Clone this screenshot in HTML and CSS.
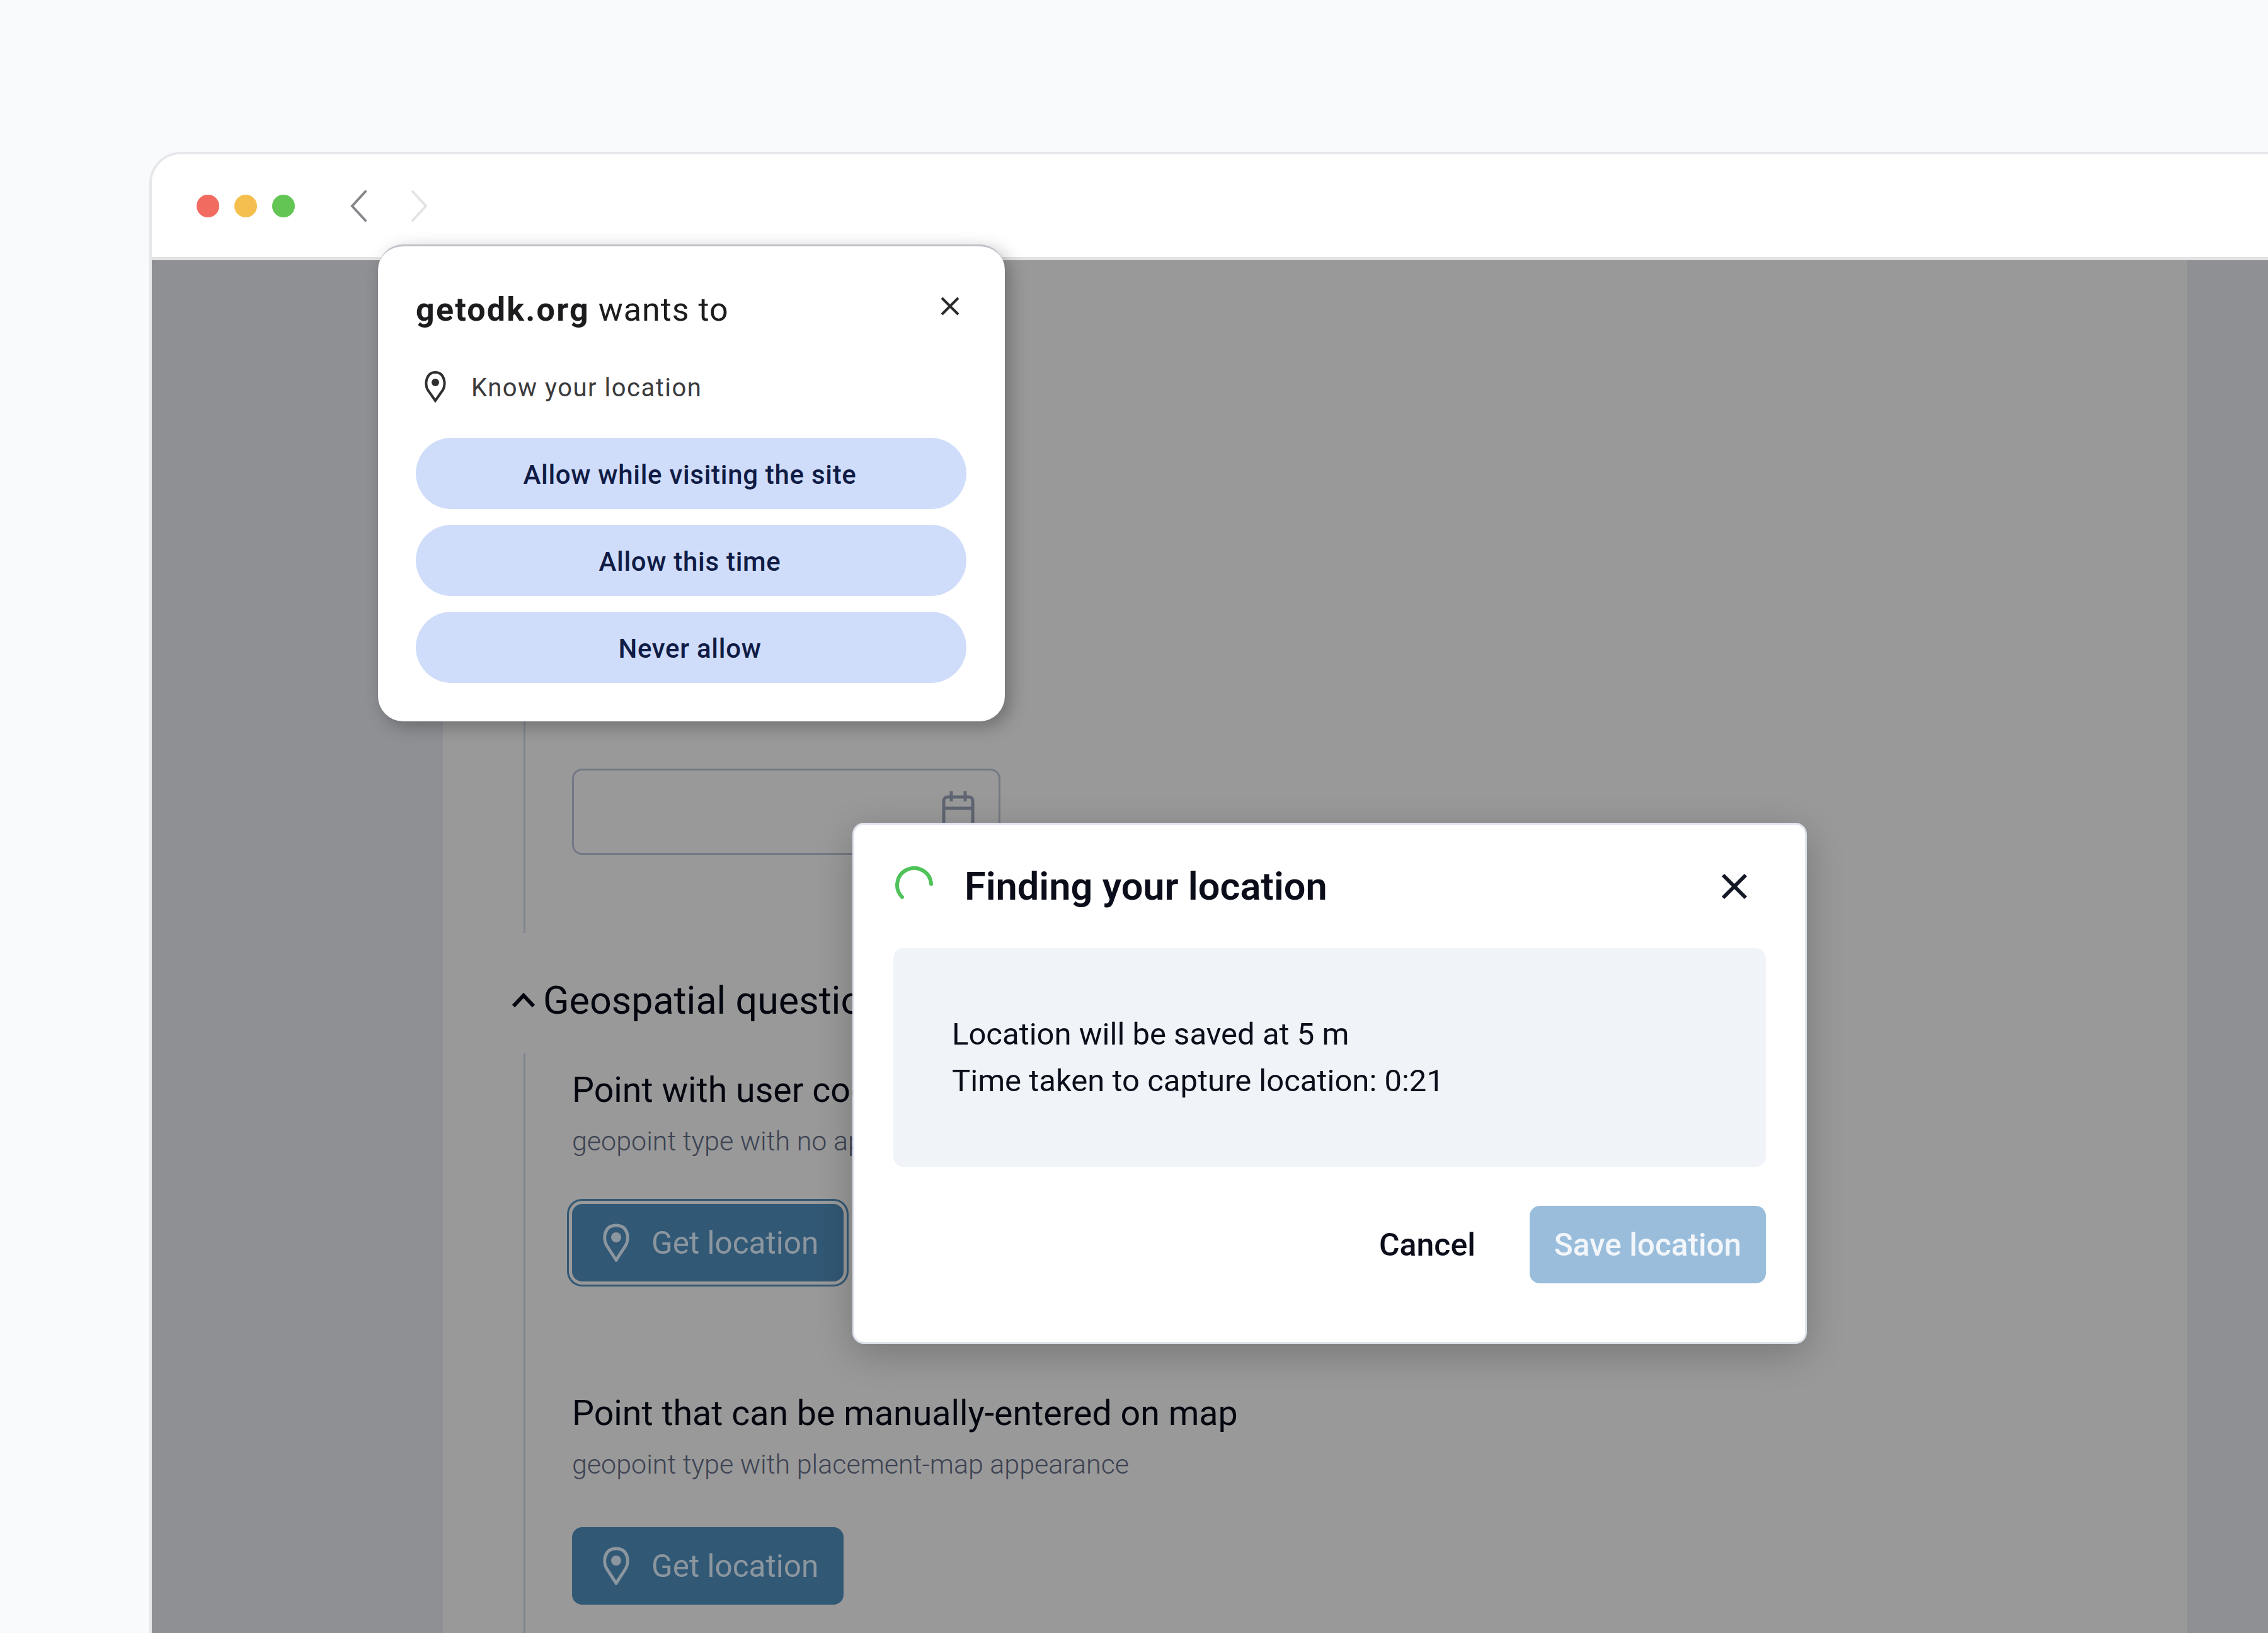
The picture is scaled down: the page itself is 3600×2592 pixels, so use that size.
FILE: index.html
```html
<!DOCTYPE html>
<html lang="en">
<head>
<meta charset="utf-8">
<title>Finding your location</title>
<link rel="stylesheet" href="styles.css">
</head>
<body>
<div class="stage">
  <div class="window">
    <header class="toolbar">
      <span class="dot dot-red"></span>
      <span class="dot dot-yellow"></span>
      <span class="dot dot-green"></span>
      <svg class="nav nav-back" viewBox="0 0 26 50"><path d="M24 2 3 25l21 23"/></svg>
      <svg class="nav nav-forward" viewBox="0 0 26 50"><path d="M2 2l21 23L2 48"/></svg>
    </header>
    <div class="content">
      <div class="gutter"></div>
      <main class="form">
        <section class="group group-first">
          <div class="date-input">
            <svg class="calendar" viewBox="0 0 52 60"><path d="M3 60V17a6 6 0 0 1 6-6h34a6 6 0 0 1 6 6v43M3 29h46M15 2v16M37 2v16"/></svg>
          </div>
        </section>
        <h2 class="section-head">
          <svg class="chevron" viewBox="0 0 36 24"><path d="M2 21 18 4l16 17"/></svg>
          Geospatial questions
        </h2>
        <section class="group">
          <div class="question">
            <h3 class="q-title">Point with user coordinates</h3>
            <p class="q-hint">geopoint type with no appearance</p>
            <button class="get-btn get-btn-focus">
              <svg class="pin-btn" viewBox="0 0 44 61"><path d="M22 58 7 35C1 25 2 3 22 3s21 22 15 32Z"/><circle cx="22" cy="22" r="8"/></svg>
              Get location
            </button>
          </div>
          <div class="question">
            <h3 class="q-title">Point that can be manually-entered on map</h3>
            <p class="q-hint">geopoint type with placement-map appearance</p>
            <button class="get-btn">
              <svg class="pin-btn" viewBox="0 0 44 61"><path d="M22 58 7 35C1 25 2 3 22 3s21 22 15 32Z"/><circle cx="22" cy="22" r="8"/></svg>
              Get location
            </button>
          </div>
        </section>
      </main>
      <div class="gutter gutter-right"></div>
    </div>
  </div>

  <aside class="prompt">
    <div class="prompt-head">
      <p class="prompt-title"><b>getodk.org</b> wants to</p>
      <svg class="prompt-close" viewBox="0 0 32 32"><path d="M3 3l26 26M29 3 3 29"/></svg>
    </div>
    <div class="prompt-row">
      <svg class="pin-small" viewBox="0 0 36 50"><path d="M18 47 6 30C1 21 3 2 18 2s17 19 12 28Z"/><circle cx="18" cy="18" r="6"/></svg>
      <span>Know your location</span>
    </div>
    <div class="prompt-actions">
      <button class="pill">Allow while visiting the site</button>
      <button class="pill">Allow this time</button>
      <button class="pill">Never allow</button>
    </div>
  </aside>

  <aside class="modal">
    <div class="modal-head">
      <svg class="spinner" viewBox="0 0 64 56"><path d="M59 30A27 27 0 1 0 13 51"/></svg>
      <h1 class="modal-title">Finding your location</h1>
      <svg class="modal-close" viewBox="0 0 44 44"><path d="M4 4l36 36M40 4 4 40"/></svg>
    </div>
    <div class="modal-panel">
      <p>Location will be saved at 5 m</p>
      <p>Time taken to capture location: 0:21</p>
    </div>
    <div class="modal-actions">
      <button class="btn-cancel">Cancel</button>
      <button class="btn-save">Save location</button>
    </div>
  </aside>
</div>
</body>
</html>
```

FILE: styles.css
```css
* { box-sizing: border-box; }
html, body { margin: 0; padding: 0; width: 3600px; height: 2592px; overflow: hidden; }
body { background: #f9fafc; font-family: Roboto, "Liberation Sans", sans-serif; }
button { font: inherit; border: 0; padding: 0; cursor: pointer; }
h1, h2, h3, p { margin: 0; font-weight: 400; }

.stage { position: relative; width: 3600px; height: 2592px; padding: 241px 0 0 237px; overflow: hidden; }

.window { height: 2351px; display: flex; flex-direction: column; background: #fff;
  border: 4px solid #e6e7ea; border-right: 0; border-bottom: 0; border-top-left-radius: 50px; overflow: hidden; }

.toolbar { flex: 0 0 168px; display: flex; align-items: center; padding-left: 71px; background: #fff; border-bottom: 5px solid #e3e3e3; }
.dot { width: 36px; height: 36px; border-radius: 50%; margin-right: 24px; }
.dot-red { background: #f16b60; }
.dot-yellow { background: #f5bf4f; }
.dot-green { background: #62c554; }
.nav { width: 26px; height: 50px; fill: none; stroke-width: 4px; stroke-linecap: round; }
.nav-back { stroke: #85868a; margin-left: 64px; }
.nav-forward { stroke: #e3e3e5; margin-left: 71px; }

.content { flex: 1; display: flex; background: #999; min-height: 0; }
.gutter { flex: 0 0 462px; background: #8f9094; }
.gutter-right { flex: 0 0 128px; }
.form { flex: 1; padding-left: 128px; color: #04060f; }

.group { border-left: 3px solid #7e8490; padding-left: 74px; }
.group-first { height: 1068px; padding-top: 807px; }
.date-input { width: 680px; height: 137px; border: 3px solid #737884; border-radius: 16px; display: flex; justify-content: flex-end; padding: 31px 38px 0 0; overflow: hidden; }
.calendar { width: 52px; height: 60px; fill: none; stroke: #5f6572; stroke-width: 5px; }

.section-head { height: 190px; display: flex; align-items: center; gap: 13px; margin-left: -18px; font-size: 61px; padding-top: 24px; }
.chevron { width: 36px; height: 24px; fill: none; stroke: #04060f; stroke-width: 6px; }

.question { padding-bottom: 150px; }
.q-title { font-size: 55.500px; line-height: 66px; padding-top: 27px; }
.q-hint { font-size: 43px; line-height: 52px; font-weight: 300; color: #3c4252; margin-top: 21px; }
.get-btn { margin-top: 74px; width: 431px; height: 123px; border-radius: 16px; background: #315875; color: #8c969f; font-size: 49.500px; font-weight: 400; display: flex; align-items: center; padding-left: 48px; gap: 34px; }
.get-btn-focus { box-shadow: 0 0 0 5px #999, 0 0 0 8px #315875; }
.pin-btn { width: 44px; height: 61px; fill: none; stroke: #8c969f; stroke-width: 5px; }
.pin-btn circle { fill: #8c969f; stroke: none; }

.prompt { position: absolute; left: 600px; top: 388px; width: 995px; height: 757px; padding: 0 61px 0 60px; background: #fff; border-radius: 40px; border-top: 3px solid #bfc1c8;
  font-family: Roboto, sans-serif; box-shadow: 8px 8px 28px rgba(0,0,0,.28); }
.prompt-head { display: flex; align-items: center; justify-content: space-between; height: 120px; padding: 0 10px 0 0; margin-top: 40px; }
.prompt-title { font-size: 52px; color: #1c1c1e; letter-spacing: 1px; }
.prompt-title b { font-weight: 700; letter-spacing: 2.200px; }
.prompt-close { width: 32px; height: 32px; fill: none; stroke: #2a2a2c; stroke-width: 4px; margin-bottom: 10px; }
.prompt-row { display: flex; align-items: center; gap: 39px; padding-left: 13px; height: 70px; margin-top: 28px; color: #3a3a3c; font-size: 40px; letter-spacing: 1.500px; }
.prompt-row span { padding-top: 3px; }
.pin-small { width: 36px; height: 50px; fill: none; stroke: #2f2f31; stroke-width: 4px; }
.pin-small circle { fill: #2f2f31; stroke: none; }
.prompt-actions { display: flex; flex-direction: column; gap: 25px; margin-top: 46px; }
.pill { height: 113px; border-radius: 57px; background: #d0ddfa; color: #101c46; font-size: 42px; font-weight: 500; letter-spacing: .7px; padding: 3px 4px 0 0; }

.modal { position: absolute; left: 1353px; top: 1306px; width: 1515px; height: 827px; padding: 0 62px; background: #fff; border: 3px solid #dfe3ec; border-radius: 18px; box-shadow: 0 16px 60px rgba(0,0,0,.22); }
.modal-head { display: flex; align-items: center; height: 196px; }
.spinner { width: 64px; height: 56px; fill: none; stroke: #4fc25a; stroke-width: 6px; stroke-linecap: round; margin: 0 0 13px 1px; }
.modal-title { flex: 1; font-size: 61.300px; font-weight: 600; color: #0b0e1a; padding-left: 48px; }
.modal-close { width: 44px; height: 44px; fill: none; stroke: #141826; stroke-width: 6px; margin-right: 28px; }
.modal-panel { height: 347px; background: #f0f3f7; border-radius: 16px; padding: 100px 0 0 93px; font-size: 49px; line-height: 74px; color: #0b0e1a; }
.modal-actions { display: flex; justify-content: flex-end; align-items: center; gap: 86px; margin-top: 62px; }
.btn-cancel { background: none; color: #0b0e1a; font-size: 50px; font-weight: 500; }
.btn-save { width: 375px; height: 123px; border-radius: 16px; background: #99bddb; color: #f2f6fa; font-size: 49.500px; font-weight: 500; }
```
